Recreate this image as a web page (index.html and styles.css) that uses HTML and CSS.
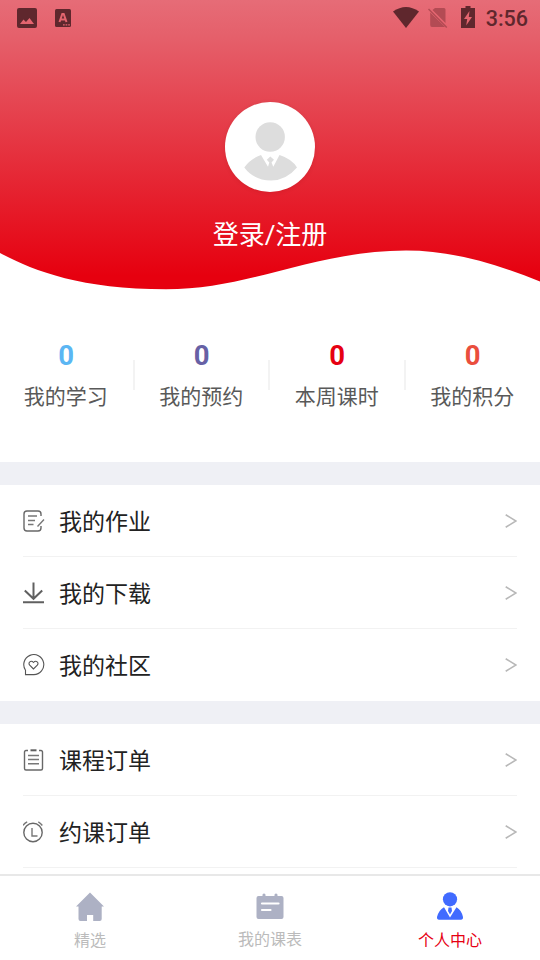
FILE: index.html
```html
<!DOCTYPE html>
<html lang="zh-CN">
<head>
<meta charset="utf-8">
<title>个人中心</title>
<link rel="stylesheet" href="styles.css">
</head>
<body>
<div class="screen">
  <header class="hero">
    <svg class="wave" width="540" height="42" viewBox="0 248 540 42"><path fill="#fff" d="M0 253C34 271 80 289 166 289.3C250 289.3 315 250.5 406 250.5C454 250.5 499 265 540 281.5V291H0Z"/></svg>
    <div class="status">
      <svg class="st-photo" width="20" height="20" viewBox="0 0 20 20"><path fill="#5f272d" fill-rule="evenodd" d="M2 0H18Q20 0 20 2V18Q20 20 18 20H2Q0 20 0 18V2Q0 0 2 0ZM3 16H17L12.5 10L9 14L6.5 11.5Z"/></svg>
      <svg class="st-a" width="16" height="18" viewBox="0 0 16 18"><rect width="16" height="18" rx="1.5" fill="#5f272d"/><path fill="none" stroke="#e4656f" stroke-width="2" d="M4.5 13L7.3 5H8.7L11.5 13M5.8 10.5H10.2"/><path stroke="#e4656f" stroke-width="1.3" stroke-dasharray="1.7 .9" d="M8 15.8H15"/></svg>
      <svg class="st-wifi" width="26" height="21" viewBox="0 0 26 21"><path fill="#5f272d" d="M0 4.5Q13-4.5 26 4.5L13 21Z"/></svg>
      <svg class="st-sim" width="20" height="20" viewBox="0 0 20 20"><path fill="#b34b54" d="M7 0H16Q17.5 0 17.5 1.5V15L4.5 2ZM2.2 4.5L17 19H4Q2.2 19 2.2 17Z"/><path stroke="#b34b54" stroke-width="1.5" d="M.5 1L18.8 19.5"/></svg>
      <svg class="st-battery" width="14" height="22" viewBox="0 0 14 22"><path fill="#5f272d" d="M4.5 0H9.5V2H14V22H0V2H4.5Z"/><path fill="#e4656f" d="M8.5 5L3 13H6.2L5.2 19.5L11 11H7.8Z"/></svg>
      <span class="clock">3:56</span>
    </div>
    <div class="avatar">
      <svg width="54" height="60" viewBox="0 0 54 60"><circle cx="26.2" cy="15" r="14.7" fill="#ddd"/><path fill="#ddd" d="M17 33L24 44.7L25.3 40.5L22.8 37.8L26.3 34.5L30 37.8L27.5 40.5L29.3 44.7L35.5 33Q48 37 53 45.5Q42 58.5 27 58.5Q10 58.5 .3 45.5Q6 37 17 33Z"/></svg>
    </div>
    <div class="login">登录/注册</div>
  </header>

  <section class="stats">
    <div class="stat"><b class="blue">0</b><span>我的学习</span></div>
    <div class="stat"><b class="purple">0</b><span>我的预约</span></div>
    <div class="stat"><b class="red">0</b><span>本周课时</span></div>
    <div class="stat"><b class="coral">0</b><span>我的积分</span></div>
  </section>

  <main class="groups">
    <section class="group">
      <div class="row">
        <svg class="icon" viewBox="0 0 22 22"><path d="M18 6V4Q18 1 15 1H4Q1 1 1 4V18Q1 21 4 21H15Q18 21 18 18V16"/><path class="soft" d="M5 6H14M5 10.5H12M5 14.5H10.5M14.5 16.5L21 9.5"/></svg>
        <span class="label">我的作业</span>
        <svg class="arrow" viewBox="0 0 12 14"><path d="M.7 .7L11 7L.7 13.3"/></svg>
      </div>
      <div class="row">
        <svg class="icon" viewBox="0 0 22 22"><path class="bold" d="M10.5 .5V16.5M1.8 8.5L10.5 16.8L19.2 8.5M0 20.2H21"/></svg>
        <span class="label">我的下载</span>
        <svg class="arrow" viewBox="0 0 12 14"><path d="M.7 .7L11 7L.7 13.3"/></svg>
      </div>
      <div class="row">
        <svg class="icon" viewBox="0 0 22 22"><path class="thin" d="M2.5 20.6V16.2A10 10 0 1 1 10.8 20.6Z"/><path class="thin" d="M10.5 15L6.7 11.2C4.5 8.5 8 5.8 10.5 8.5C13 5.8 16.5 8.5 14.3 11.2Z"/></svg>
        <span class="label">我的社区</span>
        <svg class="arrow" viewBox="0 0 12 14"><path d="M.7 .7L11 7L.7 13.3"/></svg>
      </div>
    </section>
    <section class="group">
      <div class="row">
        <svg class="icon" viewBox="0 0 22 22"><path d="M5 1.5H3Q1.5 1.5 1.5 3V19.5Q1.5 21 3 21H18Q19.5 21 19.5 19.5V3Q19.5 1.5 18 1.5H16"/><path class="bold" d="M7.5 1.3H13.5"/><path class="soft" d="M5 6.5H16M5 10.5H16M5 14.8H16"/></svg>
        <span class="label">课程订单</span>
        <svg class="arrow" viewBox="0 0 12 14"><path d="M.7 .7L11 7L.7 13.3"/></svg>
      </div>
      <div class="row">
        <svg class="icon" viewBox="0 0 22 22"><circle cx="10" cy="11.5" r="9.2"/><path class="soft" d="M9 7V15H14.5M0 4.5Q1.5 2 4.2 .8M15.3 .8Q17.7 2 19.3 4.5"/></svg>
        <span class="label">约课订单</span>
        <svg class="arrow" viewBox="0 0 12 14"><path d="M.7 .7L11 7L.7 13.3"/></svg>
      </div>
      <div class="row"></div>
    </section>
  </main>

  <nav class="tabs">
    <div class="tab">
      <svg width="28" height="30" viewBox="0 0 28 30"><path fill="#adb1c4" d="M14 .5L28 14.5H25.7V27Q25.7 29 23.7 29H17.2V23H11V29H4.5Q2.5 29 2.5 27V14.5H0Z"/></svg>
      <span>精选</span>
    </div>
    <div class="tab middle">
      <svg width="28" height="30" viewBox="0 0 28 30"><path fill="#adb1c4" d="M2.5 4H6.5V2.5Q8 .5 9.5 2.5V4H18.5V2.5Q20 .5 21.5 2.5V4H25.5Q27.5 4 27.5 6V25Q27.5 27 25.5 27H2.5Q.5 27 .5 25V6Q.5 4 2.5 4Z"/><path stroke="#fff" stroke-width="2.2" stroke-linecap="round" d="M6 11.5H22.5M6 18H14.5"/></svg>
      <span>我的课表</span>
    </div>
    <div class="tab active">
      <svg width="28" height="30" viewBox="0 0 28 30"><circle cx="14" cy="7.3" r="7.1" fill="#416bff"/><path fill="#416bff" d="M8 15.2L14 25.5L20.5 15.2Q25.5 18 27 25Q27.2 27.7 25 27.7H3Q.8 27.7 1 25Q2.7 18 8 15.2ZM12.5 15.5H15.5L16 19L14 22.5L12 19Z"/></svg>
      <span>个人中心</span>
    </div>
  </nav>
</div>
</body>
</html>
```
FILE: styles.css
```css
* { box-sizing: border-box; }
body {
  margin: 0;
  font-family: Roboto, "Noto Sans CJK SC", sans-serif;
  background: #fff;
}
svg { display: block; flex: none; }
.screen {
  width: 540px;
  height: 960px;
  display: flex;
  flex-direction: column;
  overflow: hidden;
}
.hero {
  position: relative;
  flex: none;
  height: 290px;
  display: flex;
  flex-direction: column;
  align-items: center;
  background: linear-gradient(#e66c77 0, #e5606b 36px, #e6000f 276px);
}
.wave { position: absolute; left: 0; bottom: 0; }
.status {
  width: 100%;
  height: 36px;
  display: flex;
  align-items: center;
  padding: 0 12px 0 17px;
}
.st-a { margin-left: 18px; }
.st-wifi { margin: -2px 9px 0 auto; }
.st-battery { margin: -3px 11px 0 13px; }
.clock {
  font-size: 21.5px;
  line-height: 26px;
  font-weight: 500;
  color: #5f272d;
  padding-top: 2px;
}
.avatar {
  width: 90px;
  height: 90px;
  margin-top: 66px;
  padding: 20px 0 0 19px;
  border-radius: 50%;
  background: #fff;
  box-shadow: 0 1px 4px rgba(100, 0, 0, .12);
}
.login {
  margin-top: 24px;
  font-size: 26px;
  line-height: 38px;
  color: #fff;
  z-index: 1;
}
.stats {
  flex: none;
  height: 172px;
  display: grid;
  grid-template-columns: repeat(4, 135.5px);
  padding-top: 49px;
}
.stat {
  position: relative;
  display: flex;
  flex-direction: column;
  align-items: center;
  padding-right: 4px;
  color: #595959;
}
.stat:not(:last-child)::after {
  content: "";
  position: absolute;
  right: 1px;
  top: 21px;
  width: 2px;
  height: 30px;
  background: #f3f3f3;
}
.stat b { font-size: 27.5px; line-height: 34px; padding-left: 1px; }
.stat span { font-size: 21px; line-height: 30px; margin-top: 9px; }
.blue { color: #5bb6f3; }
.purple { color: #6761a5; }
.red { color: #e60012; }
.coral { color: #ea4e3d; }
.groups { height: 412px; overflow: hidden; flex: none; }
.group { border-top: 23px solid #eff0f5; padding: 0 23px; }
.row {
  height: 72px;
  display: flex;
  align-items: center;
  border-bottom: 1px solid #f2f2f2;
}
.group:first-child .row:last-child { border-bottom-color: transparent; }
.icon {
  width: 22px;
  height: 22px;
  fill: none;
  stroke: #686868;
  stroke-width: 1.4;
}
.soft { stroke: #777; }
.bold { stroke: #606060; stroke-width: 2; }
.thin { stroke: #555; stroke-width: 1.1; }
.label {
  flex: 1;
  margin-left: 14px;
  padding-top: 4px;
  font-size: 23px;
  line-height: 34px;
  color: #222;
}
.arrow {
  width: 12px;
  height: 14px;
  margin-top: 1px;
  fill: none;
  stroke: #b8b8b8;
  stroke-width: 1.6;
}
.tabs {
  position: relative;
  flex: none;
  height: 86px;
  display: grid;
  grid-template-columns: repeat(3, 1fr);
  border-top: 2px solid #e8e8e8;
  background: #fff;
}
.tab {
  display: flex;
  flex-direction: column;
  align-items: center;
  padding-top: 16px;
  color: #bbb;
  font-size: 16px;
  line-height: 24px;
}
.tab span { margin-top: 7px; }
.tab.middle span { margin-top: 6px; }
.tab.active { color: #e60012; }
```
